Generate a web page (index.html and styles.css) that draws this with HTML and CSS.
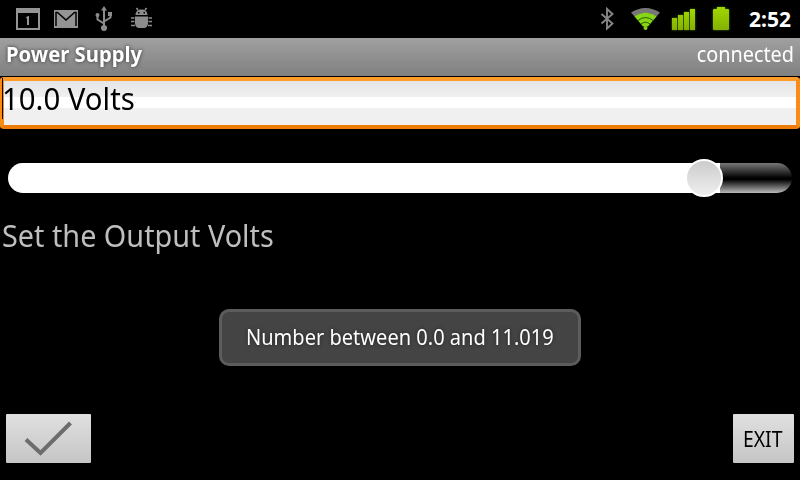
FILE: index.html
```html
<!DOCTYPE html>
<html lang="en">
<head>
<meta charset="utf-8">
<title>Power Supply</title>
<link rel="stylesheet" href="styles.css">
</head>
<body>
<header class="status">
  <svg class="icons" width="160" height="38" viewBox="0 0 160 38">
    <path fill="#949494" fill-rule="evenodd" d="M16 8h24v22H16zM18 13v15h20V13z"/>
    <path fill="#949494" d="M26 17.500l2-1.500h1v9h-2v-7l-1 .5z"/>
    <path fill="#949494" d="M54 10h24v18H54z"/>
    <path fill="none" stroke="#000" stroke-width="1.500" d="M56 26V12.500h1.500l8.500 7.500 8.500-7.500H76V26"/>
    <g fill="none" stroke="#8c8c8c" stroke-width="2"><path d="M104 27V9M104 23.500l-6.500-4v-4M104 21.500l6.500-4v-3"/></g>
    <path fill="#8c8c8c" d="M104 6l3 4.500h-6zM108 12h4v4h-4z"/>
    <circle cx="97.500" cy="15" r="2" fill="#8c8c8c"/><circle cx="104" cy="28" r="3" fill="#8c8c8c"/>
    <g fill="#8c8c8c"><path d="M135.500 15c.3-4 2.500-5.500 6-5.500s5.700 1.500 6 5.500zM135 16.500h13V24q-1 4-4 4h-5q-3 0-4-4z"/></g>
    <path d="M138 10l-1.500-2M145 10l1.500-2M131 18h3.500M131 21.500h3.500M131 25.500h4M148.500 18h3.500M148.500 21.500h3.500M148 25.500h4" stroke="#8c8c8c" stroke-width="1.700"/>
    <path fill="#000" d="M138 12h1.500v1.500H138zM143.500 12h1.500v1.500h-1.500z"/>
  </svg>
  <svg class="icons" width="150" height="38" viewBox="590 0 150 38">
    <defs>
      <linearGradient id="g" x1="0" y1="0" x2="0" y2="1"><stop offset="0" stop-color="#a0d800"/><stop offset="1" stop-color="#84b000"/></linearGradient>
      <filter id="glow" x="-30%" y="-30%" width="160%" height="160%"><feGaussianBlur stdDeviation="1.300"/></filter>
      <g id="power">
        <path d="M672 18h5v12h-5zM678 15h5v15h-5zM684 12h5v18h-5zM690 9h5v21h-5z"/>
        <path d="M717 7h8v2h3q1 0 1 1v19q0 1-1 1h-14q-1 0-1-1V10q0-1 1-1h3z"/>
      </g>
    </defs>
    <path fill="none" stroke="#858585" stroke-width="1.900" d="M601.500 14l11 9.500-5.500 5V9l5.500 5-11 9.500"/>
    <path fill="#777" d="M631 12.500Q645.500 3.500 660 12.500L656 17Q645.500 9 635 17z"/>
    <path fill="#87d514" d="M634.500 16.500Q645.500 9 656.500 16.500L648 26.500H643z"/>
    <path fill="none" stroke="#245f00" stroke-width="1" d="M638 20.500q7.500-6 15 0M641 24q4.500-3.500 9 0"/>
    <circle cx="645.500" cy="28" r="2" fill="#87d514"/>
    <use href="#power" fill="#4f7600" filter="url(#glow)"/>
    <use href="#power" fill="url(#g)"/>
  </svg>
  <span class="clock">2:52</span>
</header>
<div class="titlebar"><span class="title">Power Supply</span><span class="state">connected</span></div>
<div class="field"><span class="value">10.0 Volts</span></div>
<div class="slider"><div class="fill"></div><div class="thumb"></div></div>
<p class="hint"><span class="hint-text">Set the Output Volts</span></p>
<footer class="actions">
  <button class="btn ok" aria-label="OK"><svg width="85" height="49" viewBox="0 0 85 49"><path d="M20 25.500L34.500 39 64.500 9" fill="none" stroke="#6c6c6c" stroke-width="4"/></svg></button>
  <button class="btn exit"><span class="exit-text">EXIT</span></button>
</footer>
<div class="toast"><span class="toast-text">Number between 0.0 and 11.019</span></div>
</body>
</html>
```
FILE: styles.css
```css
* { box-sizing: border-box; }
body {
  margin: 0;
  width: 800px;
  height: 480px;
  overflow: hidden;
  position: relative;
  display: flex;
  flex-direction: column;
  background: #000;
  color: #fff;
  font-family: "Noto Sans", "Open Sans", sans-serif;
}
span { display: inline-block; white-space: nowrap; transform-origin: left center; }
.icons { display: block; }
.status { height: 38px; display: flex; align-items: center; }
.status .icons + .icons { margin-left: 430px; }
.clock { margin-left: 9px; font-size: 21px; line-height: 38px; font-weight: 700; }
.titlebar {
  height: 38px;
  padding: 0 6px;
  display: flex;
  justify-content: space-between;
  background: linear-gradient(#a0a0a0, #808080);
  font-size: 21px;
  line-height: 33px;
}
.title { font-weight: 700; text-shadow: 0 0 4px #333; transform: scaleX(.965); }
.state { transform-origin: right center; transform: scaleX(.945); }
.field {
  margin-top: 1px;
  height: 52px;
  border: 4px solid #f58a14;
  border-color: #ff9c29 #f98c18 #ee7c06;
  border-radius: 4px;
  background: linear-gradient(#e5e5e5 0, #f0f0f0 16px, #fff 16px, #fff 27px, #f0f0f0 27px);
  color: #000;
  position: relative;
}
.field::before {
  content: "";
  position: absolute;
  left: -2px;
  top: -3px;
  width: 1px;
  height: 41px;
  background: #000;
}
.value {
  margin-left: -2px;
  font-size: 30.5px;
  line-height: 35px;
  width: max-content;
  display: block;
  transform: scaleX(.962);
}
.slider {
  margin: 34px 8px 0;
  height: 30px;
  border-radius: 15px;
  display: flex;
  align-items: center;
  background: linear-gradient(#777, #000 50%, #000 55%, #bbb);
}
.fill { width: 712px; height: 30px; border-radius: 15px 0 0 15px; background: #fff; }
.thumb {
  width: 38px;
  height: 38px;
  flex: none;
  margin-left: -35px;
  border: 2px solid #fff;
  border-radius: 50%;
  background: linear-gradient(#ccc, #eee);
}
.hint { margin: 22px 0 0 2px; height: 42px; font-size: 30px; line-height: 42px; color: #bebebe; }
.hint-text { transform: scaleX(.96); }
.actions { margin: 157px 6px 0; display: flex; justify-content: space-between; }
.btn {
  height: 49px;
  padding: 0;
  border: 0;
  border-radius: 1px;
  background: linear-gradient(#e0e0e0, #c5c5c5);
  color: #000;
  font: 22px "Noto Sans", sans-serif;
}
.ok { width: 85px; }
.ok svg { display: block; filter: blur(.6px); }
.exit { width: 61px; display: flex; align-items: center; padding: 0 0 2px 10px; }
.exit-text { transform: scaleX(.88); }
.toast {
  position: absolute;
  left: 219px;
  top: 309px;
  width: 362px;
  height: 57px;
  border: 3px solid #5c5c5c;
  border-radius: 10px;
  background: #444;
  padding-left: 24px;
  font-size: 22px;
  line-height: 48px;
  text-shadow: 0 0 4px #222;
}
.toast-text { transform: scaleX(.911); }
```
